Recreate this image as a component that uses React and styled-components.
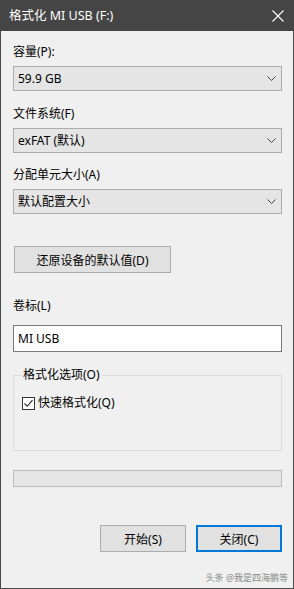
import styled, { createGlobalStyle } from "styled-components";

const GlobalStyle = createGlobalStyle`
    html, body {
        margin: 0;
        padding: 0;
        background: #f0f0f0;
    }
    body {
        font-family: "Segoe UI", "Noto Sans", "Noto Sans CJK SC", sans-serif;
        font-size: 12px;
        color: #000;
    }
`;

const Chevron = () => (
    <svg width="9" height="5" viewBox="0 0 9 5">
        <path d="M0.5 0.5 L4.5 4.5 L8.5 0.5" fill="none" stroke="#444" strokeWidth="1" />
    </svg>
);

const CloseIcon = () => (
    <svg width="12" height="12" viewBox="0 0 12 12">
        <path d="M0.5 0.5 L11.5 11.5 M11.5 0.5 L0.5 11.5" stroke="#fff" strokeWidth="1.2" />
    </svg>
);

const CheckIcon = () => (
    <svg width="11" height="11" viewBox="0 0 11 11">
        <path d="M1.5 5.5 L4.2 8.3 L9.5 2.2" fill="none" stroke="#222" strokeWidth="1.1" />
    </svg>
);

const App = () => {
    return (
        <>
            <GlobalStyle />
            <Window>
                <TitleBar>
                    <Title>格式化 MI USB (F:)</Title>
                    <CloseBtn><CloseIcon /></CloseBtn>
                </TitleBar>
                <Body>
                    <Label $top={13}>容量(P):</Label>
                    <Combo>
                        <span>59.9 GB</span>
                        <Chevron />
                    </Combo>

                    <Label $top={15}>文件系统(F)</Label>
                    <Combo>
                        <span>exFAT (默认)</span>
                        <Chevron />
                    </Combo>

                    <Label $top={14}>分配单元大小(A)</Label>
                    <Combo>
                        <span>默认配置大小</span>
                        <Chevron />
                    </Combo>

                    <RestoreButton>还原设备的默认值(D)</RestoreButton>

                    <Label $top={25}>卷标(L)</Label>
                    <TextInput>MI USB</TextInput>

                    <GroupBox>
                        <Legend>格式化选项(O)</Legend>
                        <CheckRow>
                            <CheckBox><CheckIcon /></CheckBox>
                            <span>快速格式化(Q)</span>
                        </CheckRow>
                    </GroupBox>

                    <Progress />

                    <ButtonRow>
                        <DialogButton>开始(S)</DialogButton>
                        <DialogButton $primary>关闭(C)</DialogButton>
                    </ButtonRow>

                    <Watermark>头条 @我是四海鹏等</Watermark>
                </Body>
            </Window>
        </>
    );
}

const Window = styled.div`
    width: 294px;
    height: 589px;
    box-sizing: border-box;
    border: 1px solid #4a4a4a;
    border-top: none;
    background: #f0f0f0;
    display: flex;
    flex-direction: column;
`;

const TitleBar = styled.div`
    height: 31px;
    margin: 0 -1px;
    background: #454545;
    display: flex;
    align-items: center;
    justify-content: space-between;
    padding: 0 10px 0 9px;
    flex-shrink: 0;
`;

const Title = styled.div`
    color: #fff;
    font-size: 12.5px;
    line-height: 16px;
`;

const CloseBtn = styled.div`
    width: 12px;
    height: 12px;
    display: flex;
`;

const Body = styled.div`
    flex: 1;
    display: flex;
    flex-direction: column;
    padding: 0 11px 0 12px;
`;

const Label = styled.div`
    margin-top: ${props => props.$top}px;
    height: 16px;
    line-height: 16px;
    margin-bottom: 6px;
`;

const Combo = styled.div`
    height: 25px;
    box-sizing: border-box;
    background: #e5e5e5;
    border: 1px solid #adadad;
    display: flex;
    align-items: center;
    justify-content: space-between;
    padding: 0 5px 0 4px;
    line-height: 16px;
`;

const RestoreButton = styled.div`
    margin-top: 32px;
    width: 157px;
    height: 27px;
    box-sizing: border-box;
    background: #e1e1e1;
    border: 1px solid #adadad;
    display: flex;
    align-items: center;
    justify-content: center;
    margin-left: 1px;
`;

const TextInput = styled.div`
    margin-top: 5px;
    height: 27px;
    box-sizing: border-box;
    background: #fff;
    border: 1px solid #7a7a7a;
    display: flex;
    align-items: center;
    padding: 0 4px;
`;

const GroupBox = styled.fieldset`
    margin: 15px 0 0 0;
    padding: 12px 8px 0 8px;
    height: 84px;
    box-sizing: border-box;
    border: 1px solid #dcdcdc;
    min-width: 0;
`;

const Legend = styled.legend`
    padding: 0 2px;
    margin-left: -1px;
    line-height: 16px;
    color: #000;
`;

const CheckRow = styled.div`
    display: flex;
    align-items: center;
    gap: 3px;
    line-height: 16px;
`;

const CheckBox = styled.div`
    width: 13px;
    height: 13px;
    box-sizing: border-box;
    border: 1px solid #333;
    background: #fff;
    display: flex;
    align-items: center;
    justify-content: center;
`;

const Progress = styled.div`
    margin-top: 19px;
    height: 17px;
    box-sizing: border-box;
    background: #e6e6e6;
    border: 1px solid #bcbcbc;
`;

const ButtonRow = styled.div`
    margin-top: 38px;
    display: flex;
    justify-content: flex-end;
    gap: 10px;
`;

const DialogButton = styled.div`
    width: 86px;
    height: 27px;
    box-sizing: border-box;
    background: #e1e1e1;
    border: ${props => props.$primary ? "2px solid #0078d7" : "1px solid #adadad"};
    display: flex;
    align-items: center;
    justify-content: center;
`;

const Watermark = styled.div`
    margin-top: 20px;
    align-self: flex-end;
    margin-right: -6px;
    font-size: 9px;
    color: #8a8a8a;
    line-height: 11px;
`;

export default App;
